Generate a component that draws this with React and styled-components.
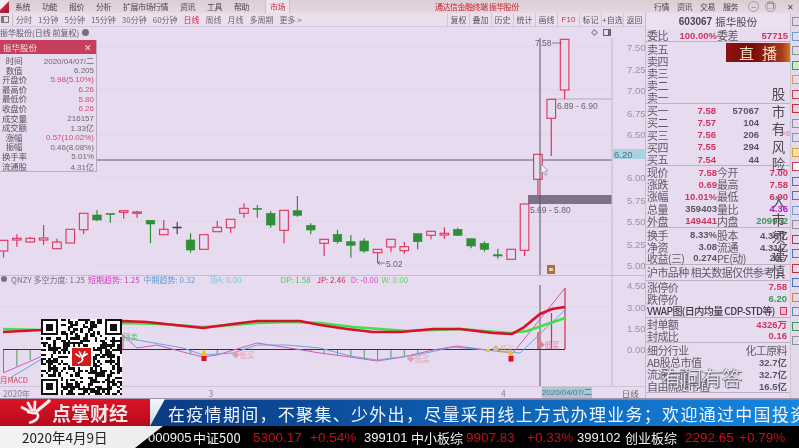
import React from 'react';
import styled, { createGlobalStyle } from 'styled-components';

const CJK = `"Noto Sans CJK SC", "Liberation Sans", sans-serif`;
const NUM = `"Liberation Sans", "Noto Sans CJK SC", sans-serif`;
const BG = '#e7dbef';
const RED = '#cf3560';
const CANDLE_RED = '#e0325c';
const CANDLE_GREEN = '#2f8f38';

const GlobalStyle = createGlobalStyle`
  html, body { margin: 0; padding: 0; background: ${BG}; }
  * { box-sizing: border-box; }
`;

const Page = styled.div`
  width: 799px;
  height: 448px;
  overflow: hidden;
  display: flex;
  flex-direction: column;
  background: ${BG};
  font-family: ${CJK};
  color: #5c5660;
  filter: blur(0.45px);
`;

/* ---------- top menu ---------- */
const MenuBar = styled.div`
  height: 13px;
  flex: none;
  display: flex;
  align-items: center;
  background: linear-gradient(#dccdd3, #e6d8de);
  font-size: 8px;
  letter-spacing: -0.5px;
  line-height: 13px;
  white-space: nowrap;
`;
const AppLogo = styled.div`
  width: 9px;
  height: 13px;
  margin-right: 6px;
  background: linear-gradient(135deg, #f3eef2 45%, #c8283f 46%, #8e1a30);
`;
const MenuItem = styled.span`
  margin-right: 12px;
  color: #4a454c;
`;
const MarketTab = styled.span`
  margin-left: 4px;
  width: 25px;
  text-align: center;
  color: #c02848;
  background: #efe3ea;
  border-left: 1px solid #cdbfc6;
  border-right: 1px solid #cdbfc6;
`;
const AppTitle = styled.span`
  margin-left: 145px;
  color: #c8202c;
`;
const MenuRight = styled.div`
  margin-left: auto;
  display: flex;
  align-items: center;
  gap: 6px;
`;
const MenuButton = styled.span`
  width: 17px;
  text-align: center;
  color: #4a454c;
`;
const WinButton = styled.span`
  width: 11px;
  height: 11px;
  border: 1px solid #a79aa4;
  border-radius: 50%;
  font: 8px/9px ${NUM};
  text-align: center;
  color: #6a6068;
  margin-left: ${(p) => p.$gap || 0}px;
`;

/* ---------- main ---------- */
const Main = styled.div`
  height: 385px;
  flex: none;
  display: flex;
  position: relative;
`;
const LeftCol = styled.div`
  width: 645px;
  flex: none;
  display: flex;
  flex-direction: column;
  position: relative;
`;
const ToolBar = styled.div`
  height: 14px;
  flex: none;
  display: flex;
  align-items: center;
  background: #ebdfee;
  border-bottom: 1px solid #d6c8da;
  font-size: 8px;
  white-space: nowrap;
`;
const ToolIcon = styled.div`
  width: 8px;
  height: 7px;
  margin: 0 3px 0 1px;
  border: 1px solid #777;
  border-left-width: 3px;
`;
const ToolSep = styled.div`
  width: 1px;
  height: 12px;
  background: #cbbccd;
  margin-right: 3px;
`;
const PeriodItem = styled.span`
  margin-right: 6px;
  color: ${(p) => (p.$active ? '#d02848' : '#6d6670')};
`;
const ToolRight = styled.div`
  margin-left: auto;
  display: flex;
  height: 13px;
`;
const ToolButton = styled.span`
  width: 22px;
  text-align: center;
  line-height: 13px;
  color: ${(p) => (p.$red ? '#c92c50' : '#5c5660')};
  border-left: 1px solid #d2c5d6;
  font-family: ${(p) => (p.$red ? NUM : CJK)};
`;

const PricePane = styled.div`
  height: 248px;
  flex: none;
  position: relative;
`;
const PaneTitle = styled.div`
  height: 11px;
  display: flex;
  align-items: center;
  font-size: 8px;
  line-height: 11px;
  color: #5f5864;
  white-space: nowrap;
`;
const TitleDot = styled.span`
  width: 7px;
  height: 7px;
  border-radius: 50%;
  background: #77707c;
  margin-left: 3px;
`;
const PaneTools = styled.div`
  margin-left: auto;
  margin-right: 34px;
  display: flex;
  align-items: center;
  gap: 6px;
`;
const DiamondTool = styled.span`
  width: 5px;
  height: 5px;
  border: 1px solid #8a8290;
  transform: rotate(45deg);
`;
const BoxTool = styled.span`
  width: 8px;
  height: 7px;
  border: 1px solid #6a6270;
  border-right-width: 3px;
`;
const ChartSvg = styled.svg`
  display: block;
  width: 645px;
  flex: none;
`;

const InfoCard = styled.div`
  position: absolute;
  left: 0;
  top: 13px;
  width: 97px;
  height: 132px;
  background: ${BG};
  border: 1px solid #bcaec2;
  border-top: 0;
  border-left: 0;
`;
const InfoHead = styled.div`
  height: 14px;
  display: flex;
  justify-content: space-between;
  padding: 0 4px 0 3px;
  background: #c63f5d;
  color: #f3dce2;
  font-size: 8.5px;
  line-height: 14px;
`;
const InfoRows = styled.div`
  padding-top: 2px;
`;
const InfoRow = styled.div`
  height: 9.6px;
  display: flex;
  justify-content: space-between;
  align-items: center;
  padding: 0 2px;
  font-size: 8.5px;
  line-height: 9.6px;
  white-space: nowrap;
`;
const InfoLabel = styled.span`
  width: 24px;
  text-align: center;
  letter-spacing: -0.3px;
  color: #58525c;
`;
const InfoValue = styled.span`
  font: 8px ${NUM};
  color: ${(p) => (p.$red ? '#d24a78' : '#6d6670')};
`;

const IndicatorPane = styled.div`
  height: 111px;
  flex: none;
  position: relative;
  border-top: 1px solid #c9bbcd;
`;
const IndicatorHead = styled.div`
  position: absolute;
  left: 0;
  top: -2px;
  height: 10px;
  display: flex;
  align-items: center;
  font-size: 8px;
  white-space: nowrap;
`;
const IndDot = styled.span`
  width: 6px;
  height: 6px;
  border-radius: 50%;
  background: #79727e;
  margin: 0 4px 0 1px;
`;
const IndText = styled.span`
  color: ${(p) => p.$color};
  margin-left: ${(p) => p.$gap || 0}px;
`;

const TimeBar = styled.div`
  height: 12px;
  flex: none;
  display: flex;
  align-items: center;
  border-top: 1px solid #cfc2d3;
  font-size: 8.5px;
  color: #8a8190;
  white-space: nowrap;
`;
const TimeTick = styled.span`
  margin-left: ${(p) => p.$gap}px;
`;
const DateTag = styled.span`
  margin-left: 36px;
  width: 50px;
  height: 11px;
  text-align: center;
  background: #a7c8d8;
  color: #5c6a78;
  font: 8px/11px ${NUM};
`;
const PeriodTag = styled.span`
  margin-left: 30px;
  color: #6d6670;
`;

const QrBox = styled.div`
  position: absolute;
  left: 41px;
  top: 306px;
  width: 81px;
  height: 76px;
  background: #fff;
`;
const QrSvg = styled.svg`
  display: block;
  width: 100%;
  height: 100%;
`;

/* ---------- quote panel ---------- */
const QuotePanel = styled.div`
  width: 145px;
  flex: none;
  position: relative;
  border-left: 1px solid #c9bccd;
  font-size: 11px;
  overflow: hidden;
`;
const StockHead = styled.div`
  height: 16px;
  display: flex;
  justify-content: center;
  align-items: center;
  gap: 3px;
  background: #ebdff0;
  font-size: 10.5px;
  color: #4b4650;
`;
const StockCode = styled.span`
  font: bold 10px ${NUM};
`;
const Section = styled.div`
  padding-left: 1px;
  padding-top: ${(p) => p.$pad || 0}px;
  border-bottom: 1px solid #bdb0c3;
`;
const QuoteRow = styled.div`
  height: ${(p) => p.$h || 12}px;
  display: grid;
  grid-template-columns: 24px 45px 43px;
  align-items: center;
  white-space: nowrap;
`;
const StatRow = styled.div`
  height: ${(p) => p.$h || 12}px;
  display: grid;
  grid-template-columns: 24px 46px 24px 47px;
  align-items: center;
  white-space: nowrap;
`;
const WideRow = styled.div`
  height: ${(p) => p.$h || 12}px;
  display: flex;
  justify-content: space-between;
  align-items: center;
  padding-right: 3px;
  white-space: nowrap;
`;
const Label = styled.span`
  color: #5f5965;
  letter-spacing: -0.6px;
  line-height: 12px;
`;
const VwapLabel = styled.span`
  color: #3f3a46;
  font-size: 10px;
  font-weight: 500;
  letter-spacing: -0.55px;
  line-height: 12px;
`;
const VwapBox = styled.span`
  width: 7px;
  height: 8px;
  border: 1px solid ${RED};
  background: #efc4d2;
`;
const Value = styled.span`
  font: bold 9.5px ${NUM};
  text-align: right;
  color: ${(p) => p.$color || '#5a5560'};
`;
const Live = styled.div`
  position: absolute;
  left: 80px;
  top: 30px;
  width: 66px;
  height: 19px;
  background: linear-gradient(90deg, #8a1410 0%, #7a0a08 40%, #a83a1c 85%, #d98a28 100%);
  color: #f0dcc0;
  font-size: 15px;
  line-height: 19px;
  letter-spacing: 8px;
  padding-left: 13px;
`;
const RiskNote = styled.div`
  position: absolute;
  left: 125px;
  top: 72px;
  width: 15px;
  display: flex;
  flex-direction: column;
  align-items: center;
  font-size: 13.5px;
  line-height: 17.6px;
  color: #4f4a54;
`;
const RiskGap = styled.div`
  height: 20px;
`;
const PctTag = styled.span`
  position: absolute;
  right: 0;
  top: 117px;
  font: 7px ${NUM};
  color: #e8779a;
`;
const Caption = styled.div`
  position: absolute;
  left: 662px;
  top: 354px;
  font-size: 20px;
  line-height: 22px;
  color: #e6e0ea;
  text-shadow: 1px 1px 1px #55505c, -1px 0 1px #6d6874;
  white-space: nowrap;
`;

const SideStrip = styled.div`
  width: 9px;
  flex: none;
  display: flex;
  flex-direction: column;
  gap: 5.5px;
  padding: 4px 0 0 1px;
  background: #e4d9ea;
  border-left: 1px solid #cfc3d4;
  overflow: hidden;
`;
const SideIcon = styled.span`
  width: 9px;
  height: 9px;
  flex: none;
  border: 1px solid ${(p) => p.$color};
  background: ${(p) => p.$fill || 'transparent'};
`;

/* ---------- lower banner ---------- */
const Banner = styled.div`
  height: 50px;
  flex: none;
  display: flex;
  flex-direction: column;
  border-top: 1px solid #a68fa8;
`;
const BannerTop = styled.div`
  height: 27px;
  flex: none;
  display: flex;
  background: linear-gradient(#f4f6fa, #cfd8e6);
`;
const Brand = styled.div`
  width: 150px;
  flex: none;
  display: flex;
  align-items: center;
  padding-left: 20px;
  background: linear-gradient(#dc1426, #b60a1c);
`;
const BrandName = styled.span`
  font-size: 19px;
  font-weight: 700;
  line-height: 27px;
  color: #f7e4e4;
  white-space: nowrap;
`;
const Notice = styled.div`
  flex: 1;
  display: flex;
  align-items: center;
  padding-left: 18px;
  clip-path: polygon(15px 0, 100% 0, 100% 100%, 0 100%);
  background: linear-gradient(90deg, #0b3a82 0%, #0d57a8 40%, #1587e0 100%);
  border-top: 1px solid #3aa0e8;
  color: #eef4fb;
  font-size: 17px;
  letter-spacing: 1.3px;
  white-space: nowrap;
  overflow: hidden;
`;
const BannerBottom = styled.div`
  height: 22px;
  flex: none;
  display: flex;
  background: linear-gradient(90deg, #f2f2f2 0%, #e4e4e4 60%, #b8b8b8 100%);
`;
const DateCell = styled.div`
  width: 135px;
  flex: none;
  padding-left: 22px;
  font-size: 13.5px;
  line-height: 22px;
  color: #222;
  white-space: nowrap;
`;
const Ticker = styled.div`
  flex: 1;
  display: flex;
  align-items: center;
  padding-left: 13px;
  clip-path: polygon(28px 0, 100% 0, 100% 100%, 0 100%);
  background: #000;
  font: 13px ${NUM};
  white-space: nowrap;
  overflow: hidden;
`;
const TickText = styled.span`
  width: ${(p) => p.$w}px;
  flex: none;
  color: ${(p) => (p.$red ? '#c80f1c' : '#f2f2f2')};
  font-size: ${(p) => (p.$red ? 13.5 : 13)}px;
  font-family: ${(p) => (p.$cn ? CJK : NUM)};
`;

/* ---------- data ---------- */
// [bodyTop, bodyBottom, wickTop, wickBottom, colour]
const R = 'r', G = 'g', K = 'k';
const candles = [
  [240.3, 251, 240.3, 257.7, R], [238.3, 240, 234.3, 246.7, R], [238.3, 242, 237, 243, R],
  [238, 240, 225, 245, R], [242, 248.7, 238.7, 248.7, R], [229.3, 243, 229.3, 243, R],
  [213.3, 229.7, 213.3, 234, R], [215, 220, 210, 221, G], [213.5, 214.5, 213.5, 222.7, G],
  [210.7, 212.3, 210.7, 218.7, R], [212, 213.3, 210.7, 217.7, R], [220.3, 224, 220.3, 243.3, G],
  [229.3, 234.7, 220, 234.7, R], [227, 228, 222, 234.3, K], [240, 250, 233.3, 252.7, G],
  [234.7, 249.3, 234.7, 249.3, R], [227.3, 231.7, 220.7, 231.7, R], [219.3, 227.7, 219.3, 232.7, R],
  [208.3, 213.3, 203.3, 217.7, R], [208.3, 209, 205, 217.7, G], [213.3, 225, 211, 227.7, G],
  [210.3, 230.3, 210.3, 243.3, R], [210.7, 215.3, 196, 216.7, G], [225.3, 230, 223.3, 234.3, G],
  [239.3, 243.3, 239.3, 256, R], [234.3, 241.7, 230, 243.7, G], [241.7, 245.3, 235, 257.7, G],
  [241, 251, 238.3, 252.7, G], [249.3, 252.7, 249.3, 263.3, R], [239.3, 247, 239.3, 251.7, R],
  [246.7, 250.7, 242, 253.7, R], [233.7, 241.7, 233.7, 249.3, G], [231.3, 235.3, 231.3, 239.3, R],
  [233.3, 235, 227.3, 239, R], [229.3, 235.3, 227.7, 236, G], [238.7, 246, 238.7, 248.3, G],
  [243.3, 249.3, 241.3, 251.7, G], [254.7, 256, 248.7, 258.7, G], [249.3, 259.3, 249.3, 259.3, R],
  [204, 250.3, 204, 256, R], [154.3, 179.3, 154.3, 196.7, R], [99.3, 118.3, 99.3, 156, R],
  [39.3, 90, 39.3, 99.3, R],
];
const candleX = (i) => 3.5 + 13.36 * i;

const priceTicks = [
  ['7.50', 47], ['7.25', 69], ['7.00', 90], ['6.75', 113], ['6.50', 134],
  ['6.00', 177.5], ['5.75', 200], ['5.50', 221], ['5.25', 244], ['5.00', 265],
];
const indicatorTicks = [['4.50', 285], ['3.00', 307], ['1.50', 328], ['0.00', 349]];

const pts = (list) => list.map((p) => p.join(',')).join(' ');
const greenLine = [[3, 329], [40, 330], [122, 323], [160, 324], [203, 327], [233, 325], [257, 323], [290, 322], [320, 323], [353, 327], [407, 331], [460, 329], [510, 333], [527, 331], [565, 318]];
const redLine = [[3, 332], [40, 330], [123, 321], [147, 322], [203, 328], [233, 324], [257, 321], [300, 321], [320, 325], [347, 329], [373, 332], [400, 332], [433, 329], [460, 329], [493, 333], [512, 334], [523, 328], [540, 314], [552, 309], [565, 307]];
const pinkLine = [[3, 373], [40, 357], [123, 335], [137, 348], [157, 345], [183, 352], [203, 357], [217, 355], [257, 343], [283, 347], [320, 353], [350, 357], [377, 361], [403, 357], [433, 350], [457, 346], [487, 350], [513, 353], [565, 288]];
const blueLine = [[10, 378], [40, 360], [123, 337], [137, 340], [183, 348], [203, 355], [233, 353], [257, 345], [287, 345], [320, 348], [350, 356], [377, 360], [417, 355], [453, 347], [487, 350], [520, 353], [565, 310]];

// height of the little indicator bars under the zero line, read off the pink curve
const barBottom = (x) => {
  for (let i = 0; i < pinkLine.length - 1; i++) {
    const [x0, y0] = pinkLine[i];
    const [x1, y1] = pinkLine[i + 1];
    if (x >= x0 && x <= x1) return y0 + ((y1 - y0) * (x - x0)) / (x1 - x0);
  }
  return 349.5;
};

const buildQr = (size) => {
  let seed = 20200409;
  const cells = [];
  const inFinder = (x, y) =>
    (x < 8 && y < 8) || (x >= size - 8 && y < 8) || (x < 8 && y >= size - 8);
  for (let y = 0; y < size; y++) {
    for (let x = 0; x < size; x++) {
      seed = (seed * 1103515245 + 12345) & 0x7fffffff;
      if (!inFinder(x, y) && (seed >> 16) % 100 < 50) cells.push([x, y]);
    }
  }
  return cells;
};
const QR_SIZE = 33;
const qrCells = buildQr(QR_SIZE);

const Finder = ({ x, y }) => (
  <g>
    <rect x={x} y={y} width="7" height="7" fill="#111" />
    <rect x={x + 1} y={y + 1} width="5" height="5" fill="#fff" />
    <rect x={x + 2} y={y + 2} width="3" height="3" fill="#111" />
  </g>
);

const infoRows = [
  ['时间', '2020/04/07/二'],
  ['数值', '6.205'],
  ['开盘价', '5.98(5.10%)', true],
  ['最高价', '6.26', true],
  ['最低价', '5.80', true],
  ['收盘价', '6.26', true],
  ['成交量', '216157'],
  ['成交额', '1.33亿'],
  ['涨幅', '0.57(10.02%)', true],
  ['振幅', '0.46(8.08%)'],
  ['换手率', '5.01%'],
  ['流通股', '4.31亿'],
];

const periods = ['1分钟', '5分钟', '15分钟', '30分钟', '60分钟'];
const sideIcons = [
  ['#8a8f9c'], ['#6aa0d8'], ['#8a8f9c'], ['#3a9a5a', '#cfe8c8'], ['#d8a040'], ['#c84050'],
  ['#c03040', '#f0d0d8'], ['#7a90c0'], ['#6aa0d8'], ['#d8a040', '#f8e0a0'], ['#c84050', '#fff'],
  ['#4a70c8'], ['#4a70c8'], ['#6aa0d8'], ['#8a8f9c'], ['#c03040'], ['#4a70c8'],
  ['#c03040'], ['#4a70c8'], ['#d8803a'], ['#4a90c8'], ['#3a9a5a'], ['#8a8f9c'],
];

/* ---------- parts ---------- */
const PriceChart = () => (
  <ChartSvg viewBox="0 38 645 237" height="237">
    {[46, 90, 134, 177, 221, 265].map((y) => (
      <line key={y} x1="97" x2="612" y1={y} y2={y} stroke="#cdbdd2" strokeDasharray="1 3" />
    ))}
    <line x1="0" x2="612" y1="160" y2="160" stroke="#625a68" />
    <line x1="550" x2="612" y1="99" y2="99" stroke="#b8aabd" />
    <rect x="528" y="195" width="84" height="9" fill="#7e7288" />
    <line x1="612" x2="612" y1="38" y2="275" stroke="#c4b7c9" />
    {candles.map(([top, bottom, wickTop, wickBottom, c], i) => {
      const x = candleX(i);
      const colour = c === R ? CANDLE_RED : c === G ? CANDLE_GREEN : '#4a4450';
      return (
        <g key={i}>
          <line x1={x} x2={x} y1={wickTop} y2={wickBottom} stroke={colour} strokeWidth="1.2" />
          <rect
            x={x - 4.3}
            y={top}
            width="8.6"
            height={Math.max(bottom - top, 1)}
            fill={c === R ? BG : colour}
            stroke={colour}
            strokeWidth={c === R ? 1.1 : 0.6}
          />
        </g>
      );
    })}
    <line x1="540" x2="540" y1="38" y2="275" stroke="#5d5564" />
    <path d="M541 164l0 10 2.4-2.2 2 3.6 1.4-.8-2-3.4 3.2-.3z" fill="#f4f0f6" stroke="#77707c" strokeWidth=".6" />
    <rect x="613" y="149" width="32" height="10" fill="#a9d2e2" />
    <text x="614" y="157.5" fontFamily={NUM} fontSize="9.5" fill="#5e6a78">6.20</text>
    <g fontFamily={NUM} fontSize="9.5" fill="#9a92a0">
      {priceTicks.map(([t, y]) => (
        <text key={t} x="627" y={y + 3.5}>{t}</text>
      ))}
    </g>
    <g fontFamily={NUM} fontSize="8.5" fill="#6a6270">
      <text x="535" y="46">7.58</text>
      <text x="557" y="109">6.89 - 6.90</text>
      <text x="530" y="213">5.69 - 5.80</text>
      <text x="386" y="267">5.02</text>
    </g>
    <path d="M552 43h10M385 263h-7m2-2l-2 2 2 2" stroke="#6a6270" strokeWidth=".8" fill="none" />
    <rect x="547" y="265" width="8" height="9" fill="#a8703c" />
    <rect x="549" y="268" width="4" height="3" fill="#e8d0b0" />
  </ChartSvg>
);

const IndicatorChart = () => {
  const bars = [];
  for (let i = 0; i < 43; i++) {
    const x = candleX(i);
    if (x < 38 || (x > 122 && x < 135)) continue;
    bars.push(x);
  }
  return (
    <ChartSvg viewBox="0 276 645 110" height="110">
      <line x1="0" x2="612" y1="307" y2="307" stroke="#cdbdd2" strokeDasharray="1 3" />
      <line x1="0" x2="612" y1="328" y2="328" stroke="#cdbdd2" strokeDasharray="1 3" />
      <line x1="612" x2="612" y1="276" y2="386" stroke="#c4b7c9" />
      {[3.5, 16.9, 30.2].map((x, i) => (
        <line key={x} x1={x} x2={x} y1="349" y2={372 - i * 6} stroke="#4f9a58" />
      ))}
      {bars.map((x) => {
        const bottom = barBottom(x);
        if (bottom <= 349.5) return null;
        return <line key={x} x1={x} x2={x} y1="349.5" y2={bottom} stroke="#5b9a5c" />;
      })}
      <line x1="123" x2="123" y1="335" y2="349" stroke="#d05070" />
      <line x1="540" x2="540" y1="285" y2="386" stroke="#5d5564" />
      <path d="M538 349V332M551.5 349V313M565 349V288" stroke="#d83048" strokeWidth="1.2" fill="none" />
      <line x1="3" x2="565" y1="349.5" y2="349.5" stroke="#5a1470" strokeWidth="1.2" />
      <polyline points={pts(pinkLine)} fill="none" stroke="#cc5cc0" strokeWidth="1" />
      <polyline points={pts(blueLine)} fill="none" stroke="#6ca4dc" strokeWidth="1" />
      <polyline points={pts(greenLine)} fill="none" stroke="#3fe04a" strokeWidth="2.6" />
      <polyline points={pts(redLine)} fill="none" stroke="#d8102c" strokeWidth="2.6" />
      <path d="M204 349l3 7h-6z" fill="#f0c418" />
      <rect x="201.5" y="356" width="5" height="5" fill="#d8102c" />
      <path d="M511 349l2.5 7h-5z" fill="#f0c418" />
      <rect x="508.5" y="356" width="5" height="5.5" fill="#d8102c" />
      <rect x="486" y="349" width="4" height="3" fill="#f0c418" />
      <g fontFamily={CJK} fontSize="7.5">
        <text x="123" y="340" fill="#6cb874">顶卖</text>
        <text x="232" y="358" fill="#e2a0b4">◆低买</text>
        <text x="407" y="362" fill="#e2a0b4">◆低买</text>
        <text x="492" y="352" fill="#dcb888">◆低买</text>
        <text x="537" y="348" fill="#e07e92">◆低买</text>
        <text x="0" y="383" fill="#d83858">月MACD</text>
      </g>
      <g fontFamily={NUM} fontSize="9.5" fill="#9a92a0">
        {indicatorTicks.map(([t, y]) => (
          <text key={t} x="627" y={y + 3.5}>{t}</text>
        ))}
      </g>
    </ChartSvg>
  );
};

const QrCode = () => (
  <QrBox>
    <QrSvg viewBox={`0 0 ${QR_SIZE} ${QR_SIZE}`} preserveAspectRatio="none" shapeRendering="crispEdges">
      {qrCells.map(([x, y]) => (
        <rect key={`${x}-${y}`} x={x} y={y} width="1" height="1" fill="#111" />
      ))}
      <Finder x={0} y={0} />
      <Finder x={QR_SIZE - 7} y={0} />
      <Finder x={0} y={QR_SIZE - 7} />
      <rect x="12" y="12" width="9" height="9" fill="#fff" />
      <rect x="12.5" y="12.5" width="8" height="8" rx="1" fill="#d01c1c" />
      <path d="M14 15l2 1.5M15.5 14l1 2M18 14l-1 2.3M19 15l-2.4 1.6q1.2 1.6-1.6 2.6" stroke="#fff" strokeWidth=".7" fill="none" shapeRendering="auto" />
    </QrSvg>
  </QrBox>
);

const BrandMark = () => (
  <svg width="32" height="27" viewBox="0 0 32 27">
    <g stroke="#fbeaea" strokeLinecap="round" fill="none">
      <path d="M2 8.5L9 12" strokeWidth="2.8" />
      <path d="M8 4l4 7.5" strokeWidth="2.8" />
      <path d="M15 3l-.5 8.5" strokeWidth="2.8" />
      <path d="M29 2L17 12" strokeWidth="3.4" />
      <path d="M8 13q8 2 9 1q3 4-2 7.5q-3 1.6-5 2" strokeWidth="2.6" />
    </g>
  </svg>
);

const App = () => (
  <Page>
    <GlobalStyle />
    <MenuBar>
      <AppLogo />
      <MenuItem>系统</MenuItem>
      <MenuItem>功能</MenuItem>
      <MenuItem>报价</MenuItem>
      <MenuItem>分析</MenuItem>
      <MenuItem>扩展市场行情</MenuItem>
      <MenuItem>资讯</MenuItem>
      <MenuItem>工具</MenuItem>
      <MenuItem>帮助</MenuItem>
      <MarketTab>市场</MarketTab>
      <AppTitle>通达信金融终端 振华股份</AppTitle>
      <MenuRight>
        <MenuButton>行情</MenuButton>
        <MenuButton>资讯</MenuButton>
        <MenuButton>交易</MenuButton>
        <MenuButton>服务</MenuButton>
        <WinButton $gap={3}>–</WinButton>
        <WinButton>❐</WinButton>
        <MenuButton>✕</MenuButton>
      </MenuRight>
    </MenuBar>

    <Main>
      <LeftCol>
        <ToolBar>
          <ToolIcon />
          <ToolSep />
          <PeriodItem>分时</PeriodItem>
          {periods.map((p) => (
            <PeriodItem key={p}>{p}</PeriodItem>
          ))}
          <PeriodItem $active>日线</PeriodItem>
          <PeriodItem>周线</PeriodItem>
          <PeriodItem>月线</PeriodItem>
          <PeriodItem>多周期</PeriodItem>
          <PeriodItem>更多 &gt;</PeriodItem>
          <ToolRight>
            <ToolButton>复权</ToolButton>
            <ToolButton>叠加</ToolButton>
            <ToolButton>历史</ToolButton>
            <ToolButton>统计</ToolButton>
            <ToolButton>画线</ToolButton>
            <ToolButton $red>F10</ToolButton>
            <ToolButton>标记</ToolButton>
            <ToolButton>+自选</ToolButton>
            <ToolButton>返回</ToolButton>
          </ToolRight>
        </ToolBar>

        <PricePane>
          <PaneTitle>
            振华股份(日线 前复权)
            <TitleDot />
            <PaneTools>
              <DiamondTool />
              <BoxTool />
            </PaneTools>
          </PaneTitle>
          <PriceChart />
          <InfoCard>
            <InfoHead>
              <span>振华股份</span>
              <span>✕</span>
            </InfoHead>
            <InfoRows>
              {infoRows.map(([label, value, red]) => (
                <InfoRow key={label}>
                  <InfoLabel>{label}</InfoLabel>
                  <InfoValue $red={red}>{value}</InfoValue>
                </InfoRow>
              ))}
            </InfoRows>
          </InfoCard>
        </PricePane>

        <IndicatorPane>
          <IndicatorChart />
          <IndicatorHead>
            <IndDot />
            <IndText $color="#77707c">QNZY 多空力度: 1.25</IndText>
            <IndText $color="#d838c8" $gap={3}>短期趋势: 1.25</IndText>
            <IndText $color="#5c9ad8" $gap={4}>中期趋势: 0.32</IndText>
            <IndText $color="#78c8d8" $gap={14}>顶A: 0.00</IndText>
            <IndText $color="#40d050" $gap={39}>DP: 1.58</IndText>
            <IndText $color="#d02048" $gap={6}>JP: 2.46</IndText>
            <IndText $color="#d848c8" $gap={5}>D: -0.00</IndText>
            <IndText $color="#58d868" $gap={3}>W: 0.00</IndText>
          </IndicatorHead>
        </IndicatorPane>

        <TimeBar>
          <TimeTick $gap={3}>2020年</TimeTick>
          <TimeTick $gap={178}>3</TimeTick>
          <TimeTick $gap={288}>4</TimeTick>
          <DateTag>2020/04/07/二</DateTag>
          <PeriodTag>日线</PeriodTag>
        </TimeBar>

        <QrCode />
      </LeftCol>

      <QuotePanel>
        <StockHead>
          <StockCode>603067</StockCode>
          振华股份
        </StockHead>
        <Section>
          <StatRow>
            <Label>委比</Label>
            <Value $color={RED}>100.00%</Value>
            <Label>委差</Label>
            <Value $color={RED}>57715</Value>
          </StatRow>
        </Section>
        <Section $pad={1}>
          {['卖五', '卖四', '卖三', '卖二', '卖一'].map((l) => (
            <QuoteRow key={l}>
              <Label>{l}</Label>
            </QuoteRow>
          ))}
        </Section>
        <Section>
          {[
            ['买一', '7.58', '57067'],
            ['买二', '7.57', '104'],
            ['买三', '7.56', '206'],
            ['买四', '7.55', '294'],
            ['买五', '7.54', '44'],
          ].map(([l, p, v]) => (
            <QuoteRow key={l} $h={12.25}>
              <Label>{l}</Label>
              <Value $color={RED}>{p}</Value>
              <Value>{v}</Value>
            </QuoteRow>
          ))}
        </Section>
        <Section>
          {[
            ['现价', '7.58', RED, '今开', '7.00', RED],
            ['涨跌', '0.69', RED, '最高', '7.58', RED],
            ['涨幅', '10.01%', RED, '最低', '6.90', RED],
            ['总量', '359403', null, '量比', '4.36', '#b020c8'],
            ['外盘', '149441', RED, '内盘', '209962', '#3a9a5a'],
          ].map(([a, b, bc, c, d, dc]) => (
            <StatRow key={a} $h={12.1}>
              <Label>{a}</Label>
              <Value $color={bc}>{b}</Value>
              <Label>{c}</Label>
              <Value $color={dc}>{d}</Value>
            </StatRow>
          ))}
        </Section>
        <Section>
          {[
            ['换手', '8.33%', '股本', '4.36亿'],
            ['净资', '3.08', '流通', '4.31亿'],
            ['收益(三)', '0.274', 'PE(动)', '20.7'],
          ].map(([a, b, c, d]) => (
            <StatRow key={a}>
              <Label>{a}</Label>
              <Value>{b}</Value>
              <Label>{c}</Label>
              <Value>{d}</Value>
            </StatRow>
          ))}
        </Section>
        <Section>
          <WideRow $h={15}>
            <Label>沪市品种 相关数据仅供参考</Label>
          </WideRow>
        </Section>
        <Section>
          <WideRow>
            <Label>涨停价</Label>
            <Value $color={RED}>7.58</Value>
          </WideRow>
          <WideRow>
            <Label>跌停价</Label>
            <Value $color="#3a9a5a">6.20</Value>
          </WideRow>
          <WideRow>
            <VwapLabel>VWAP图(日内均量 CDP-STD等)</VwapLabel>
            <VwapBox />
          </WideRow>
        </Section>
        <Section>
          <WideRow>
            <Label>封单额</Label>
            <Value $color={RED}>4326万</Value>
          </WideRow>
          <WideRow>
            <Label>封成比</Label>
            <Value $color={RED}>0.16</Value>
          </WideRow>
        </Section>
        <Section $pad={1}>
          <WideRow>
            <Label>细分行业</Label>
            <Label>化工原料</Label>
          </WideRow>
          <WideRow>
            <Label>AB股总市值</Label>
            <Value>32.7亿</Value>
          </WideRow>
          <WideRow>
            <Label>流通市值</Label>
            <Value>32.7亿</Value>
          </WideRow>
          <WideRow>
            <Label>自由流通市值</Label>
            <Value>16.5亿</Value>
          </WideRow>
        </Section>
        <Live>直播</Live>
        <PctTag>+8</PctTag>
        <RiskNote>
          {'股市有风险'.split('').map((c, i) => (
            <span key={i}>{c}</span>
          ))}
          <RiskGap />
          {'入市须谨慎'.split('').map((c, i) => (
            <span key={i}>{c}</span>
          ))}
        </RiskNote>
      </QuotePanel>

      <SideStrip>
        {sideIcons.map(([color, fill], i) => (
          <SideIcon key={i} $color={color} $fill={fill} />
        ))}
      </SideStrip>

      <Caption>有问有答</Caption>
    </Main>

    <Banner>
      <BannerTop>
        <Brand>
          <BrandMark />
          <BrandName>点掌财经</BrandName>
        </Brand>
        <Notice>在疫情期间，不聚集、少外出，尽量采用线上方式办理业务；欢迎通过中国投资者网</Notice>
      </BannerTop>
      <BannerBottom>
        <DateCell>2020年4月9日</DateCell>
        <Ticker>
          <TickText $w={45}>000905</TickText>
          <TickText $w={60} $cn>中证500</TickText>
          <TickText $w={57} $red>5300.17</TickText>
          <TickText $w={54} $red>+0.54%</TickText>
          <TickText $w={47}>399101</TickText>
          <TickText $w={55} $cn>中小板综</TickText>
          <TickText $w={61} $red>9907.83</TickText>
          <TickText $w={50} $red>+0.33%</TickText>
          <TickText $w={48}>399102</TickText>
          <TickText $w={60} $cn>创业板综</TickText>
          <TickText $w={54} $red>2292.65</TickText>
          <TickText $w={50} $red>+0.79%</TickText>
        </Ticker>
      </BannerBottom>
    </Banner>
  </Page>
);

export default App;
